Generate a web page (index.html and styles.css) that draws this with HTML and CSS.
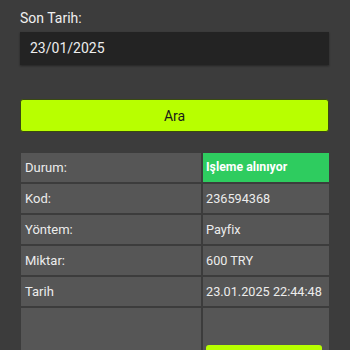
FILE: index.html
```html
<!DOCTYPE html>
<html lang="tr">
	<head>
		<meta charset="utf-8"/>
		<title>Ödeme Sorgulama</title>
		<link rel="stylesheet" href="styles.css">
	</head>
	<body>
		<div class="form">
			<label class="lbl" for="endDate">Son Tarih:</label>
			<div class="input" id="endDate">23/01/2025</div>
			<button class="btnSearch">Ara</button>
		</div>
		<table class="result">
			<tr>
				<td class="key">Durum:</td>
				<td class="val status">Işleme alınıyor</td>
			</tr>
			<tr>
				<td class="key">Kod:</td>
				<td class="val">236594368</td>
			</tr>
			<tr>
				<td class="key">Yöntem:</td>
				<td class="val">Payfix</td>
			</tr>
			<tr>
				<td class="key">Miktar:</td>
				<td class="val">600 TRY</td>
			</tr>
			<tr>
				<td class="key">Tarih</td>
				<td class="val">23.01.2025 22:44:48</td>
			</tr>
			<tr>
				<td class="key last"></td>
				<td class="val last"><button class="btnAction">&nbsp;</button></td>
			</tr>
		</table>
	</body>
</html>
```
FILE: styles.css
```css
html, body {
	margin: 0;
	height: 100%;
}
body {
	background-color: #3c3c3c;
	font-family: Roboto, "Liberation Sans", sans-serif;
	color: #ececec;
	overflow: hidden;
}
.form {
	padding: 10px 21px 0 20px;
}
.lbl {
	display: block;
	font-size: 14px;
	line-height: 16px;
	color: #f0f0f0;
}
.input {
	margin-top: 6px;
	height: 33px;
	line-height: 33px;
	padding-left: 10px;
	background-color: #232323;
	font-size: 14px;
	color: #ededed;
	box-shadow: 0 1px 2px rgba(0,0,0,0.4);
}
.btnSearch {
	display: block;
	width: 100%;
	margin-top: 34px;
	height: 33px;
	background-color: #b8ff00;
	border: 1px solid #3a4a10;
	border-radius: 3px;
	font-family: Roboto, "Liberation Sans", sans-serif;
	font-size: 14px;
	color: #1a1a1a;
	padding: 0;
}
.result {
	margin: 19px 0 0 19px;
	width: 312px;
	border-spacing: 2px;
	table-layout: fixed;
}
.result td {
	background-color: #565656;
	height: 29px;
	padding: 6px 3px 0 4px;
	box-sizing: border-box;
	vertical-align: top;
	font-size: 13px;
	line-height: 17px;
	white-space: nowrap;
	overflow: hidden;
}
.key {
	width: 180px;
}
.result td.val {
	padding-left: 3px;
	font-size: 12.7px;
}
.result td.status {
	background-color: #2ecc5f;
	font-weight: bold;
	font-size: 12.3px;
	color: #ffffff;
}
.result td.last {
	height: 60px;
}
.btnAction {
	margin-top: 31px;
	width: 116px;
	height: 20px;
	background-color: #b8ff00;
	border: none;
	border-radius: 3px;
}
```
